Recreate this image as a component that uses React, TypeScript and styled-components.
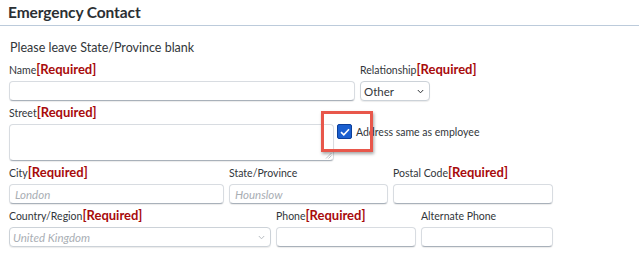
import styled, { createGlobalStyle } from "styled-components";

const GlobalStyle = createGlobalStyle`
  body {
    margin: 0;
    background: #ffffff;
    font-family: Lato, "Liberation Sans", sans-serif;
    color: #32363a;
  }
`;

const Page = styled.div`
  width: 639px;
  height: 257px;
  overflow: hidden;
  background: #ffffff;
`;

const Header = styled.div`
  height: 26px;
  box-sizing: border-box;
  padding: 3px 0 0 8px;
  border-bottom: 1px solid #bccbdb;
  font-size: 15.5px;
  font-weight: 700;
  color: #2b2f33;
  letter-spacing: -0.1px;
`;

const Body = styled.div`
  padding: 13px 0 0 9px;
`;

const Notice = styled.div`
  font-size: 12.5px;
  line-height: 18px;
  margin: 0 0 2px 1px;
`;

const Row = styled.div`
  display: flex;
  align-items: flex-end;
  gap: 5px;
  margin-bottom: 1px;
`;

const Field = styled.div<{ $w: number }>`
  width: ${(p) => p.$w}px;
  display: flex;
  flex-direction: column;
`;

const Label = styled.div`
  height: 18px;
  display: flex;
  align-items: flex-end;
  font-size: 10.5px;
  line-height: 14px;
  color: #32363a;
  margin-bottom: 4px;
`;

const Req = styled.span`
  color: #a80b0b;
  font-weight: 700;
  font-size: 13px;
  line-height: 16px;
`;

const Input = styled.div<{ $h?: number }>`
  box-sizing: border-box;
  height: ${(p) => p.$h ?? 20}px;
  border: 1px solid #d8dce1;
  border-bottom-color: #a9b1ba;
  border-radius: 4px;
  box-shadow: 0 1px 1px rgba(0, 0, 0, 0.08);
  background: #ffffff;
  position: relative;
  display: flex;
  align-items: center;
  padding: 0 5px;
  font-size: 11.5px;
`;

const Placeholder = styled.span`
  color: #a9aeb4;
  font-style: italic;
  font-size: 11.5px;
`;

const SelectBox = styled(Input)`
  justify-content: space-between;
  padding: 0 5px 0 3px;
  border-color: #ccd2d8;
`;

const Chevron = styled.svg`
  width: 7px;
  height: 5px;
`;

const Grip = styled.svg`
  position: absolute;
  right: 1px;
  bottom: 1px;
  width: 7px;
  height: 7px;
`;

const CheckWrap = styled.div`
  position: relative;
  display: flex;
  align-items: center;
  gap: 4px;
  margin: 0 0 22px -2px;
`;

const Box = styled.div`
  width: 15px;
  height: 15px;
  box-sizing: border-box;
  background: #1a5fd0;
  border: 1px solid #0c3f99;
  border-radius: 2px;
  display: flex;
  align-items: center;
  justify-content: center;
`;

const CheckText = styled.span`
  font-size: 10.5px;
`;

const Highlight = styled.div`
  position: absolute;
  left: -16px;
  top: -13px;
  width: 52px;
  height: 41px;
  box-sizing: border-box;
  border: 3px solid #e8574b;
  box-shadow: 1px 2px 3px rgba(0, 0, 0, 0.35);
  pointer-events: none;
`;

function Select({ value, w, muted }: { value: string; w: number; muted?: boolean }) {
  return (
    <SelectBox style={{ width: w }}>
      {muted ? <Placeholder>{value}</Placeholder> : <span>{value}</span>}
      <Chevron viewBox="0 0 7 5">
        <path
          d="M0.8 1 L3.5 3.8 L6.2 1"
          fill="none"
          stroke={muted ? "#b8bdc2" : "#32363a"}
          strokeWidth="1"
        />
      </Chevron>
    </SelectBox>
  );
}

export default function App() {
  return (
    <Page>
      <GlobalStyle />
      <Header>Emergency Contact</Header>
      <Body>
        <Notice>Please leave State/Province blank</Notice>

        <Row>
          <Field $w={346}>
            <Label>
              Name<Req>[Required]</Req>
            </Label>
            <Input />
          </Field>
          <Field $w={70}>
            <Label>
              Relationship<Req>[Required]</Req>
            </Label>
            <Select value="Other" w={70} />
          </Field>
        </Row>

        <Row>
          <Field $w={325}>
            <Label>
              Street<Req>[Required]</Req>
            </Label>
            <Input $h={37}>
              <Grip viewBox="0 0 7 7">
                <path d="M6.5 1 L1 6.5 M6.5 3.5 L3.5 6.5" stroke="#b0b5ba" strokeWidth="0.8" />
              </Grip>
            </Input>
          </Field>
          <CheckWrap>
            <Box>
              <svg width="10" height="8" viewBox="0 0 10 8">
                <path d="M1 4.2 L3.8 6.8 L9 1.2" fill="none" stroke="#ffffff" strokeWidth="1.6" />
              </svg>
            </Box>
            <CheckText>Address same as employee</CheckText>
            <Highlight />
          </CheckWrap>
        </Row>

        <Row>
          <Field $w={215}>
            <Label>
              City<Req>[Required]</Req>
            </Label>
            <Input>
              <Placeholder>London</Placeholder>
            </Input>
          </Field>
          <Field $w={159}>
            <Label>State/Province</Label>
            <Input>
              <Placeholder>Hounslow</Placeholder>
            </Input>
          </Field>
          <Field $w={160}>
            <Label>
              Postal Code<Req>[Required]</Req>
            </Label>
            <Input />
          </Field>
        </Row>

        <Row>
          <Field $w={262}>
            <Label>
              Country/Region<Req>[Required]</Req>
            </Label>
            <Select value="United Kingdom" w={262} muted />
          </Field>
          <Field $w={140}>
            <Label>
              Phone<Req>[Required]</Req>
            </Label>
            <Input />
          </Field>
          <Field $w={132}>
            <Label>Alternate Phone</Label>
            <Input />
          </Field>
        </Row>
      </Body>
    </Page>
  );
}
